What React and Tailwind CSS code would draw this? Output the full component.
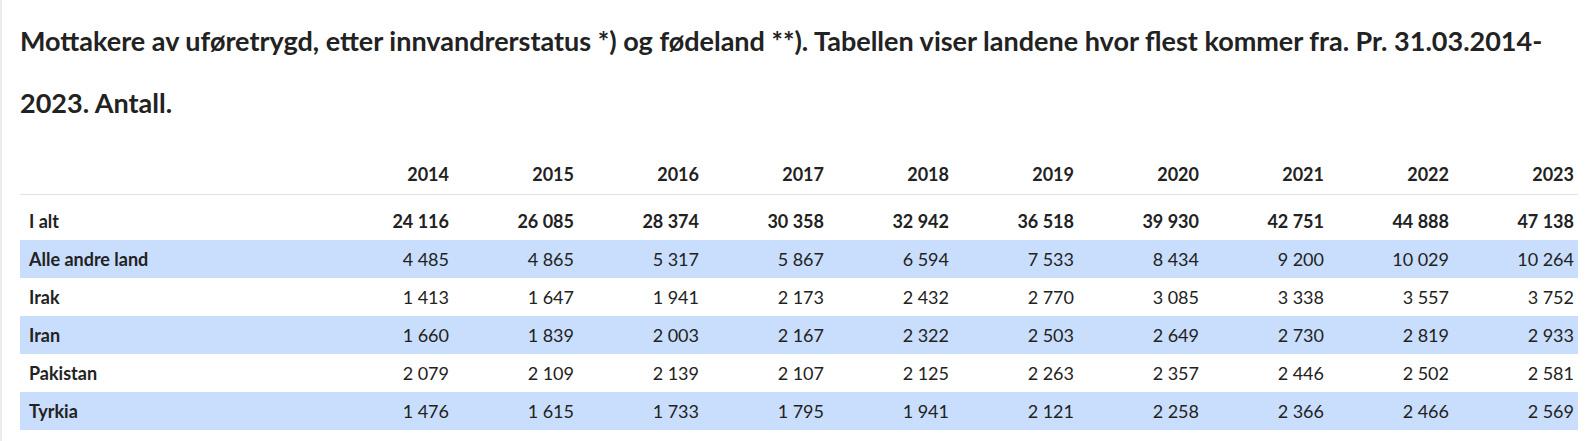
const YEARS = ['2014', '2015', '2016', '2017', '2018', '2019', '2020', '2021', '2022', '2023']

const TOTAL = ['24 116', '26 085', '28 374', '30 358', '32 942', '36 518', '39 930', '42 751', '44 888', '47 138']

const ROWS = [
  { label: 'Alle andre land', values: ['4 485', '4 865', '5 317', '5 867', '6 594', '7 533', '8 434', '9 200', '10 029', '10 264'] },
  { label: 'Irak', values: ['1 413', '1 647', '1 941', '2 173', '2 432', '2 770', '3 085', '3 338', '3 557', '3 752'] },
  { label: 'Iran', values: ['1 660', '1 839', '2 003', '2 167', '2 322', '2 503', '2 649', '2 730', '2 819', '2 933'] },
  { label: 'Pakistan', values: ['2 079', '2 109', '2 139', '2 107', '2 125', '2 263', '2 357', '2 446', '2 502', '2 581'] },
  { label: 'Tyrkia', values: ['1 476', '1 615', '1 733', '1 795', '1 941', '2 121', '2 258', '2 366', '2 466', '2 569'] },
]

const nb = (s) => s.replace(' ', '\u00a0')

export default function App() {
  return (
    <main
      className="min-h-[441px] bg-white border-l-2 border-[#ececec] pl-[18px] pr-[18px] text-[#222]"
      style={{ fontFamily: 'Lato, "Liberation Sans", sans-serif' }}
    >
      <h1 className="pt-[10px] text-[27px] leading-[62px] font-bold">
        Mottakere av uføretrygd, etter innvandrerstatus *) og fødeland **). Tabellen viser landene hvor flest kommer fra. Pr. 31.03.2014-{'\u200b'}2023. Antall.
      </h1>

      <table className="mt-[21px] w-full table-fixed border-collapse text-[18px]">
        <colgroup>
          <col className="w-[308px]" />
          {YEARS.map((y) => (
            <col key={y} />
          ))}
        </colgroup>
        <thead>
          <tr className="h-[39px] border-b border-[#e2e2e2]">
            <th />
            {YEARS.map((y) => (
              <th key={y} className="pr-[4px] text-right font-bold">
                {y}
              </th>
            ))}
          </tr>
        </thead>
        <tbody>
          <tr className="h-[8px]">
            <td colSpan={11} />
          </tr>
          <tr className="h-[38px] font-bold">
            <td className="pl-[9px]">I alt</td>
            {TOTAL.map((v, i) => (
              <td key={i} className="pr-[4px] text-right">
                {nb(v)}
              </td>
            ))}
          </tr>
          {ROWS.map((r, idx) => (
            <tr key={r.label} className={`h-[38px] ${idx % 2 === 0 ? 'bg-[#c9defc]' : 'bg-white'}`}>
              <td className="pl-[9px] font-bold">{r.label}</td>
              {r.values.map((v, i) => (
                <td key={i} className="pr-[4px] text-right">
                  {nb(v)}
                </td>
              ))}
            </tr>
          ))}
        </tbody>
      </table>
    </main>
  )
}
